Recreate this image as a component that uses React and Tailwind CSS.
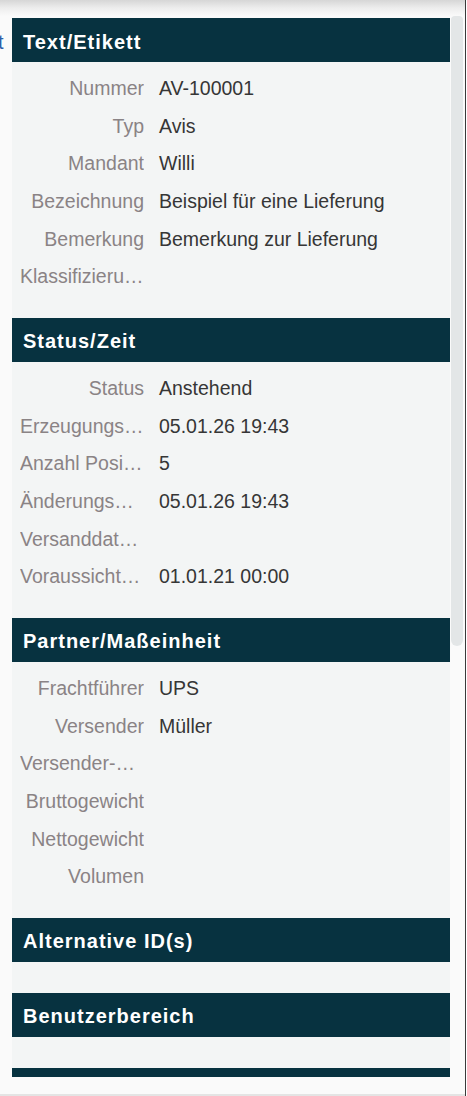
import React from "react";

const sections = [
  {
    title: "Text/Etikett",
    rows: [
      ["Nummer", "AV-100001"],
      ["Typ", "Avis"],
      ["Mandant", "Willi"],
      ["Bezeichnung", "Beispiel für eine Lieferung"],
      ["Bemerkung", "Bemerkung zur Lieferung"],
      ["Klassifizierung", ""],
    ],
  },
  {
    title: "Status/Zeit",
    rows: [
      ["Status", "Anstehend"],
      ["Erzeugungsdatum", "05.01.26 19:43"],
      ["Anzahl Positionen", "5"],
      ["Änderungsdatum", "05.01.26 19:43"],
      ["Versanddatum", ""],
      ["Voraussichtliches Lieferdatum", "01.01.21 00:00"],
    ],
  },
  {
    title: "Partner/Maßeinheit",
    rows: [
      ["Frachtführer", "UPS"],
      ["Versender", "Müller"],
      ["Versender-Referenz", ""],
      ["Bruttogewicht", ""],
      ["Nettogewicht", ""],
      ["Volumen", ""],
    ],
  },
  { title: "Alternative ID(s)", rows: [] },
  { title: "Benutzerbereich", rows: [] },
  { title: "Dokumente", rows: [] },
];

function Header({ title }) {
  return (
    <div className="h-[44px] shrink-0 bg-[#073240] flex items-center pl-[11px] pt-[3px] text-white font-bold text-[20px] tracking-[1px] leading-none">
      {title}
    </div>
  );
}

function Section({ title, rows }) {
  return (
    <div className="bg-[#f3f5f5]">
      <Header title={title} />
      {rows.length > 0 ? (
        <div className="pt-[8px] pb-[22px] pl-[8px]">
          {rows.map(([label, value]) => (
            <div key={label} className="h-[37.67px] flex items-center text-[19.5px] leading-none">
              <div className="w-[124px] shrink-0 text-right truncate text-[#8a8385] py-[3px]">
                {label}
              </div>
              <div className="pl-[15px] text-[#363636] whitespace-nowrap">{value}</div>
            </div>
          ))}
        </div>
      ) : (
        <div className="h-[31px]" />
      )}
    </div>
  );
}

export default function App() {
  return (
    <div
      className="w-[467px] h-[1096px] flex bg-white overflow-hidden"
      style={{ fontFamily: '"Liberation Sans", Arial, sans-serif' }}
    >
      <div className="w-[465px] h-full flex flex-col bg-[#fafafa]">
        <div className="h-[16px] shrink-0 bg-gradient-to-b from-[#d6d6d6] via-[#ededed] to-[#fafafa]" />
        <div className="flex h-[1061px] shrink-0">
          <div className="w-[12px] shrink-0 overflow-hidden relative">
            <div className="pt-[16px] text-[20px] leading-none text-[#2f5ea8] -ml-[2px]">t</div>
          </div>
          <div className="w-[438px] shrink-0 overflow-hidden pt-[2px] flex flex-col">
            {sections.map((s) => (
              <Section key={s.title} title={s.title} rows={s.rows} />
            ))}
          </div>
          <div className="w-[1px] shrink-0" />
          <div className="w-[12px] shrink-0">
            <div className="h-[630px] rounded-b-[6px] rounded-t-[4px] bg-[#e3e6e7]" />
          </div>
          <div className="flex-1" />
        </div>
        <div className="flex-1" />
        <div className="h-[2px] shrink-0 bg-[#e4e4e4]" />
      </div>
      <div className="w-[1px] h-full bg-[#3a3a3a]" />
      <div className="w-[1px] h-full bg-white" />
    </div>
  );
}
